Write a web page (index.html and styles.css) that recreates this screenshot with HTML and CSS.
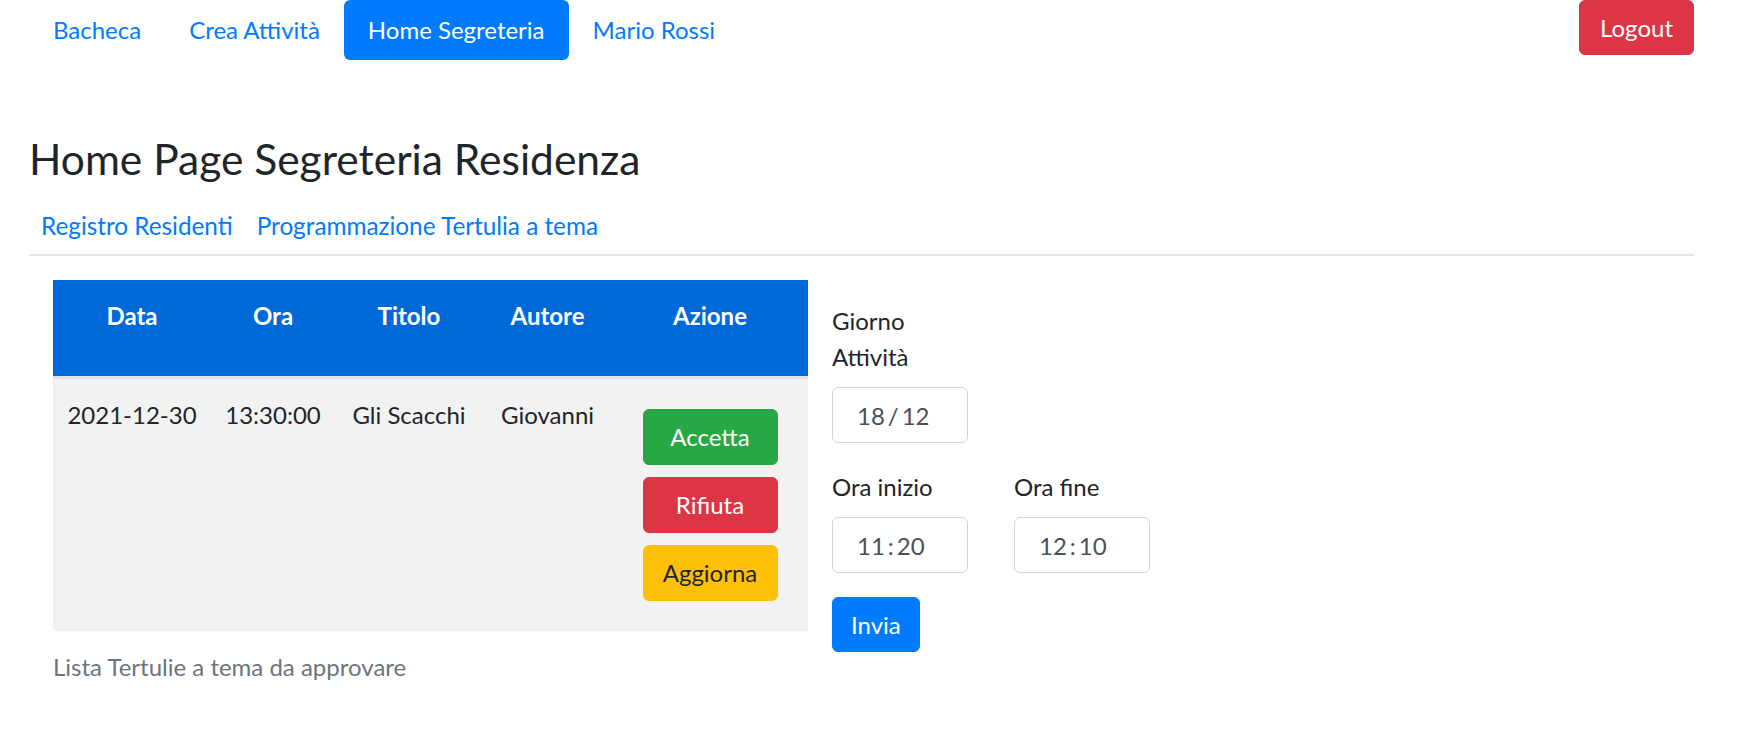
FILE: index.html
```html
<!DOCTYPE html>
<html lang="it">
<head>
<meta charset="utf-8">
<title>Home Segreteria</title>
<link rel="stylesheet" href="styles.css">
</head>
<body>
<header class="topbar">
  <nav class="pills">
    <a class="pill" href="#">Bacheca</a>
    <a class="pill" href="#">Crea Attività</a>
    <a class="pill active" href="#">Home Segreteria</a>
    <a class="pill" href="#">Mario Rossi</a>
  </nav>
  <button class="btn btn-red logout" type="button">Logout</button>
</header>
<main class="page">
  <h1 class="title">Home Page Segreteria Residenza</h1>
  <nav class="subnav">
    <a href="#">Registro Residenti</a>
    <a href="#">Programmazione Tertulia a tema</a>
  </nav>
  <section class="content">
    <table class="requests">
      <caption>Lista Tertulie a tema da approvare</caption>
      <colgroup>
        <col class="c-data"><col class="c-ora"><col class="c-titolo"><col class="c-autore"><col class="c-azione">
      </colgroup>
      <thead>
        <tr><th>Data</th><th>Ora</th><th>Titolo</th><th>Autore</th><th>Azione</th></tr>
      </thead>
      <tbody>
        <tr>
          <td>2021-12-30</td>
          <td>13:30:00</td>
          <td>Gli Scacchi</td>
          <td>Giovanni</td>
          <td>
            <button class="btn act btn-green" type="button">Accetta</button>
            <button class="btn act btn-red" type="button">Rifiuta</button>
            <button class="btn act btn-yellow" type="button">Aggiorna</button>
          </td>
        </tr>
      </tbody>
    </table>
    <form class="schedule">
      <div class="group day">
        <label class="field-label">Giorno Attività</label>
        <input class="field" type="text" value="18&thinsp;/&thinsp;12">
      </div>
      <div class="group times">
        <div class="time">
          <label class="field-label">Ora inizio</label>
          <input class="field" type="text" value="11&thinsp;:&thinsp;20">
        </div>
        <div class="time">
          <label class="field-label">Ora fine</label>
          <input class="field" type="text" value="12&thinsp;:&thinsp;10">
        </div>
      </div>
      <button class="btn btn-blue send" type="button">Invia</button>
    </form>
  </section>
</main>
</body>
</html>
```
FILE: styles.css
```css
* { box-sizing: border-box; }

body {
  margin: 0;
  font-family: Lato, "Liberation Sans", sans-serif;
  font-size: 24px;
  line-height: 1.5;
  color: #212529;
  background: #fff;
}

a { text-decoration: none; }

.topbar {
  display: flex;
  justify-content: space-between;
  align-items: flex-start;
  padding: 0 43px 0 29px;
}

.pills { display: flex; }

.pill {
  display: block;
  padding: 12px 24px;
  line-height: 36px;
  color: #007bff;
  border-radius: 6px;
}

.pill.active {
  background: #007bff;
  color: #fff;
}

.btn {
  font-family: inherit;
  font-size: 24px;
  line-height: 36px;
  border: 1px solid transparent;
  border-radius: 6px;
  cursor: pointer;
}

.btn-red { background: #dc3545; border-color: #dc3545; color: #fff; }
.btn-green { background: #28a745; border-color: #28a745; color: #fff; }
.btn-yellow { background: #ffc107; border-color: #ffc107; color: #212529; }
.btn-blue { background: #007bff; border-color: #007bff; color: #fff; }

.logout {
  height: 55px;
  padding: 0 20px;
}

.page { padding: 0 43px 0 29px; }

.title {
  margin: 74px 0 0;
  font-size: 42.5px;
  font-weight: 400;
  line-height: 50px;
}

.subnav {
  display: flex;
  margin-top: 12px;
  padding: 12px 0 10px;
  border-bottom: 2px solid #e1e4e8;
}

.subnav a {
  padding: 0 12px;
  color: #007bff;
  line-height: 36px;
  font-size: 24.3px;
}

.content {
  display: flex;
  align-items: flex-start;
  gap: 24px;
  margin-top: 24px;
  padding-left: 24px;
}

.requests {
  width: 755px;
  table-layout: fixed;
  border-collapse: collapse;
}

.c-data { width: 158px; }
.c-ora { width: 124px; }
.c-titolo { width: 148px; }
.c-autore { width: 129px; }
.c-azione { width: 196px; }

.requests th {
  background: #0069d9;
  color: #fff;
  font-weight: 700;
  padding: 18px 0 42px;
  vertical-align: top;
  text-align: center;
  border-bottom: 3px solid #dee2e6;
}

.requests td {
  background: #f2f2f2;
  padding: 18px 0;
  vertical-align: top;
  text-align: center;
  white-space: nowrap;
}

.requests caption {
  caption-side: bottom;
  text-align: left;
  padding: 18px 0;
  color: #6c757d;
}

.act {
  display: block;
  width: 135px;
  height: 56px;
  margin: 12px auto;
  padding: 0;
}

.schedule {
  padding-top: 23px;
}

.group { margin-bottom: 26px; }

.day { width: 136px; }

.times {
  display: grid;
  grid-template-columns: 136px 136px;
  column-gap: 46px;
  margin-bottom: 24px;
}

.field-label {
  display: block;
  margin-bottom: 12px;
  line-height: 36px;
}

.field {
  display: block;
  width: 136px;
  height: 56px;
  padding: 0 0 0 24px;
  font-family: inherit;
  font-size: 24px;
  color: #495057;
  background: #fff;
  border: 1px solid #ced4da;
  border-radius: 6px;
}

.send {
  display: block;
  height: 55px;
  padding: 0 18px;
}
```
